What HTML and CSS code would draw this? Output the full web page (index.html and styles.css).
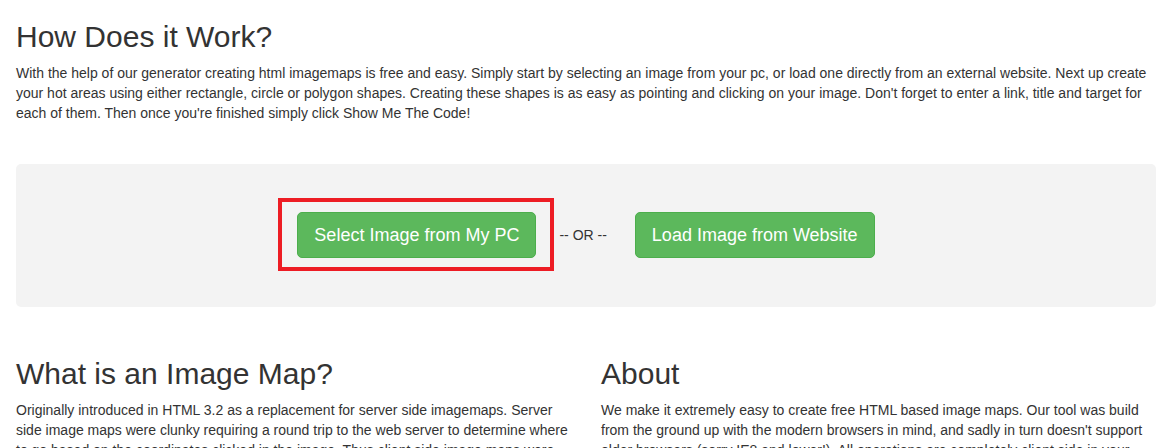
FILE: index.html
```html
<!DOCTYPE html>
<html>
<head>
<meta charset="utf-8">
<title>How Does it Work?</title>
<link rel="stylesheet" href="styles.css">
</head>
<body>
<div class="container">
  <h2 class="title">How Does it Work?</h2>
  <p class="text">With the help of our generator creating html imagemaps is free and easy. Simply start by selecting an image from your pc, or load one directly from an external website. Next up create your hot areas using either rectangle, circle or polygon shapes. Creating these shapes is as easy as pointing and clicking on your image. Don't forget to enter a link, title and target for each of them. Then once you're finished simply click Show Me The Code!</p>

  <div class="well">
    <span class="highlight"><button class="btn">Select Image from My PC</button></span>
    <span class="or">-- OR --</span>
    <button class="btn">Load Image from Website</button>
  </div>

  <div class="cols">
    <div class="col">
      <h2 class="title">What is an Image Map?</h2>
      <p class="text">Originally introduced in HTML 3.2 as a replacement for server side imagemaps. Server side image maps were clunky requiring a round trip to the web server to determine where to go based on the coordinates clicked in the image. Thus client side image maps were born, and they are still widely supported today.</p>
    </div>
    <div class="col">
      <h2 class="title">About</h2>
      <p class="text">We make it extremely easy to create free HTML based image maps. Our tool was build from the ground up with the modern browsers in mind, and sadly in turn doesn't support older browsers (sorry IE8 and lower!). All operations are completely client side in your browser, nothing is uploaded.</p>
    </div>
  </div>
</div>
</body>
</html>
```

FILE: styles.css
```css
html, body {
  margin: 0;
  padding: 0;
  background: #fff;
}

body {
  font-family: "Liberation Sans", Arial, Helvetica, sans-serif;
  font-size: 14px;
  line-height: 20px;
  color: #333;
}

.container {
  padding: 0 19px 0 16px;
}

.title {
  font-family: "Liberation Sans", Arial, Helvetica, sans-serif;
  font-weight: 500;
  font-size: 30px;
  line-height: 33px;
  margin: 20px 0 10px;
  color: #333;
}

.text {
  margin: 0 0 10px;
}

.well {
  margin: 41px 0 30px;
  padding: 48px 0 49px;
  background: #f3f3f3;
  border-radius: 5px;
  display: flex;
  justify-content: center;
  align-items: center;
}

.btn {
  font-family: "Liberation Sans", Arial, Helvetica, sans-serif;
  font-size: 18px;
  line-height: 24px;
  padding: 10px 16px;
  color: #fff;
  background: #5cb85c;
  border: 1px solid #4cae4c;
  border-radius: 5px;
  margin: 0;
  cursor: pointer;
  display: block;
}

.highlight {
  position: relative;
  display: block;
}

.highlight::after {
  content: "";
  position: absolute;
  top: -14px;
  left: -19px;
  right: -18px;
  bottom: -13px;
  border: 4px solid #ed1c24;
  pointer-events: none;
}

.or {
  margin: 0 28px 0 23px;
  font-size: 14px;
  color: #333;
}

.cols {
  display: grid;
  grid-template-columns: 555px 555px;
  column-gap: 30px;
}
```
